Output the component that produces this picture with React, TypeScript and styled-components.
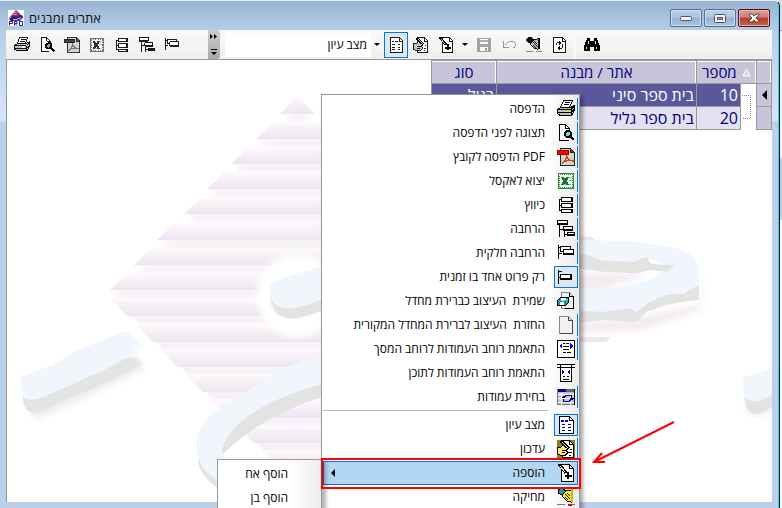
import React from "react";
import styled, { createGlobalStyle, css } from "styled-components";

const Global = createGlobalStyle`
  *, *::before, *::after { box-sizing: border-box; }
  html, body { margin: 0; height: 100%; overflow: hidden; background: #e6e6f2; }
  body, button, select { font-family: "Open Sans", "Liberation Sans", Arial, sans-serif; font-size: 12px; }
  button { margin: 0; padding: 0; border: 0; background: none; color: inherit; }
`;

/* ---------- window frame ---------- */

const Desktop = styled.div`
  height: 100vh;
  padding-right: 2px;
  background: linear-gradient(#dcdce8 30px, #8a8aa0 30px, #8a8aa0 31px, #f4f4fa 31px, #f4f4fa 158px, #c8c8dc 158px, #c8c8dc 220px, #fff 220px);
`;

const WindowFrame = styled.main`
  position: relative;
  display: flex;
  flex-direction: column;
  height: 100%;
  padding: 0 7px 6px 6px;
  border-top: 1px solid #e9f1fa;
  border-right: 1px solid #16202c;
  border-top-right-radius: 6px;
  background: linear-gradient(#98b3d2, #b6cde8 30px, #c3d8ee 60px, #d6e5f4 120px, #b9d1ea 121px);
  box-shadow: inset -1px 0 0 #2fd0f0;
`;

const TitleBar = styled.header`
  flex: none;
  display: flex;
  align-items: center;
  gap: 5px;
  height: 29px;
  padding: 5px 2px 0;
`;

const TitleText = styled.h1`
  flex: 1;
  margin: 0;
  font-size: 13px;
  line-height: 16px;
  font-weight: 400;
  color: #111;
`;

const Controls = styled.div`
  display: flex;
  gap: 2px;
`;

const ControlButton = styled.button<{ $danger?: boolean }>`
  display: grid;
  place-items: center;
  width: 32px;
  height: 18px;
  border: 1px solid ${(p) => (p.$danger ? "#4c1018" : "#586f8c")};
  border-radius: 2px;
  background: ${(p) =>
    p.$danger
      ? "linear-gradient(#dba49a, #cf7e72 45%, #b63c2b 50%, #c9634a)"
      : "linear-gradient(#bdd1e8, #adc5e0 45%, #93b1d3 50%, #aac4e2)"};
  box-shadow: inset 0 0 0 1px ${(p) => (p.$danger ? "#e8b5ac" : "#cfdff0")};
`;

/* ---------- toolbar ---------- */

const Toolbar = styled.div`
  flex: none;
  display: flex;
  align-items: center;
  height: 30px;
  border-bottom: 1px solid #999;
  background: linear-gradient(#fafafa, #eeeeee);
`;

const ToolGroup = styled.div`
  display: flex;
  align-items: center;
  gap: 1px;
  padding-left: 4px;
`;

const ToolButton = styled.button<{ $pressed?: boolean; $dim?: boolean }>`
  display: grid;
  place-items: center;
  width: 24px;
  height: 26px;
  opacity: ${(p) => (p.$dim ? 0.45 : 1)};
  ${(p) =>
    p.$pressed &&
    css`
      border: 1px solid #0078d7;
      background: #dce8f6;
    `}
`;

const ArrowButton = styled.button`
  display: grid;
  place-items: center;
  width: 12px;
  height: 24px;
`;

const Grip = styled.button`
  display: flex;
  flex-direction: column;
  align-items: center;
  justify-content: space-between;
  width: 12px;
  height: 29px;
  margin-left: 24px;
  padding: 4px 0;
  border-radius: 0 3px 3px 0;
  background: linear-gradient(#cdcdcd, #a9a9a9);
`;

const ModeSelect = styled.select`
  appearance: none;
  width: 146px;
  height: 24px;
  margin-left: 5px;
  padding: 0 4px;
  border: 0;
  background: #fff;
  color: #000;
`;

const EditGroup = styled.div`
  display: flex;
  align-items: center;
  gap: 1px;
  height: 29px;
  padding-right: 3px;
  border-right: 2px solid #f9f9f9;
`;

/* ---------- content ---------- */

const Content = styled.section`
  position: relative;
  flex: 1;
  min-height: 0;
  border-left: 1px solid #999;
  background: #fff;
  overflow: hidden;
`;

const WatermarkSvg = styled.svg`
  position: absolute;
  top: 0;
  left: 0;
`;

const Grid = styled.table`
  position: relative;
  width: 340px;
  margin-left: auto;
  border-collapse: collapse;
  table-layout: fixed;
  font-size: 16px;
  color: #00007f;
`;

const HeadCell = styled.th`
  height: 23px;
  padding: 0;
  border: 1px solid #999;
  background: #c8c5da;
  font-size: 15px;
  font-weight: 400;
  line-height: 20px;
  box-shadow: inset -1px 1px 0 #fff;
`;

const SortHead = styled.span`
  display: flex;
  align-items: center;
  justify-content: space-between;
  padding: 0 5px;
`;

const Row = styled.tr<{ $selected?: boolean }>`
  color: ${(p) => (p.$selected ? "#fff" : "#00007f")};
  --cell: ${(p) => (p.$selected ? "#5b579c" : "#e4e0f0")};
`;

const Cell = styled.td`
  height: 23px;
  padding: 0 2px;
  border: 1px solid #999;
  background: var(--cell);
  line-height: 20px;
  white-space: nowrap;
`;

const MarkCell = styled(Cell)`
  padding: 0 4px;
  background: #c8c5da;
`;

const TreeCell = styled.td`
  padding: 0;
  background: #fff;
`;

/* ---------- menus ---------- */

const menuBox = css`
  position: absolute;
  direction: rtl;
  border: 1px solid #999;
  background: linear-gradient(to left, #ececec, #fff 31px);
`;

const Menu = styled.div`
  ${menuBox}
  top: 93px;
  right: 199px;
  width: 259px;
  padding: 2px 1px;
  box-shadow: 3px 3px 4px rgba(0, 0, 0, 0.35);
`;

const SubMenu = styled.div`
  ${menuBox}
  top: 458px;
  right: 457px;
  width: 105px;
  padding: 2px 1px;
  box-shadow: 4px 3px 4px rgba(0, 0, 0, 0.3);
`;

const MenuItem = styled.button<{ $active?: boolean }>`
  display: flex;
  align-items: center;
  gap: 9px;
  width: 100%;
  height: 24px;
  border: 1px solid ${(p) => (p.$active ? "#0078d7" : "transparent")};
  border-right: 0;
  background: ${(p) => (p.$active ? "#b3d7f3" : "transparent")};
  color: #000;
  text-align: right;
`;

const IconSlot = styled.span<{ $checked?: boolean; $edge?: boolean }>`
  display: grid;
  place-items: center;
  width: 24px;
  height: 22px;
  border-right: 1px solid ${(p) => (p.$edge ? "#0078d7" : "transparent")};
  ${(p) =>
    p.$checked &&
    css`
      border: 1px solid #0078d7;
      background: #dce8f6;
    `}
`;

const MenuLabel = styled.span`
  flex: 1;
  line-height: 16px;
  white-space: pre;
`;

const SubLabel = styled(MenuLabel)`
  padding-right: 32px;
`;

const ArrowSlot = styled.span`
  display: grid;
  padding-left: 7px;
`;

const Separator = styled.hr`
  height: 1px;
  margin: 1px 30px 2px 0;
  border: 0;
  background: #b8b8b8;
`;

/* ---------- annotations ---------- */

const RedBox = styled.div`
  position: absolute;
  top: 457px;
  right: 198px;
  width: 260px;
  height: 31px;
  border: 2px solid #f00;
`;

const RedArrow = styled.svg`
  position: absolute;
  top: 417px;
  right: 103px;
`;

/* ---------- icons ---------- */

type IconName =
  | "print" | "preview" | "pdf" | "excel" | "collapse" | "expand" | "partial" | "single"
  | "saveDefault" | "restore" | "fitScreen" | "fitContent" | "columns" | "view" | "edit"
  | "add" | "delete" | "save" | "undo" | "refresh" | "find";

const Page = ({ x = 3 }: { x?: number }) => (
  <g stroke="#000" fill="#fff">
    <path d={`M${x + 0.5} .5H12.5l4 4V17.5H${x + 0.5}z`} />
    <path d="M12.5 .5v4h4" fill="none" />
  </g>
);

const glyph = (name: IconName, mono: boolean): React.ReactNode => {
  const tone = (colour: string, grey: string) => (mono ? grey : colour);
  switch (name) {
    case "print":
      return (
        <>
          <path d="M6.5 .5h9l-3 7h-9z" fill="#fff" stroke="#000" />
          <path d="M8 2.5h5M7 4.5h5" stroke="#000" />
          <path d="M3.500 7.500h10l4-2v5l-3 5h-11l-3-2v-4z" fill="#c0c0c0" stroke="#000" />
          <path d="M1 9.500h13l3-3M1 12.500h13l3-3M14.500 10v5M2 15.500h12" stroke="#000" fill="none" />
          <path d="M9 11h3" stroke={tone("#e8e000", "#fff")} strokeWidth="2" />
        </>
      );
    case "preview":
      return (
        <>
          <path d="M12.500 12V4.500l-4-4h-6v16h9" fill="#fff" stroke="#000" />
          <path d="M8.500 .500v4h4" fill="none" stroke="#000" />
          <circle cx="11" cy="10" r="3" fill={tone("#5fd8e0", "#999")} stroke="#000" strokeWidth="2" />
          <path d="M13 12l4 4" stroke="#000" strokeWidth="2.500" />
        </>
      );
    case "pdf":
      return (
        <>
          <path d="M3.500 .500h10l4 4v13h-14z" fill={tone("#c5ddc8", "#d4d4d4")} stroke="#222" />
          <path d="M13.500 .500v4h4z" fill={tone("#f00", "#555")} stroke="#222" />
          <path d="M5 16c3-3 5-7 4.500-9M9.500 7c.500 4 3 6 7 6M5 15c3-2.500 7-3 12-2" fill="none" stroke={tone("#e8392c", "#777")} strokeWidth="1.300" />
          <path d="M.500 2.500h11v4H.500z" fill={tone("#f00", "#444")} stroke={tone("#900", "#222")} />
        </>
      );
    case "excel":
      return (
        <>
          <path d="M1.500 1.500h15v15h-15z" fill="#f5faf5" stroke={tone("#2f8a3c", "#666")} />
          <path d="M2.500 2.500h13v13h-13z" stroke={tone("#2f8a3c", "#666")} strokeDasharray="1 1" />
          <path d="M4 12.500h10M12 5.500h3M12 8.500h3" stroke={tone("#8fc397", "#aaa")} />
          <path d="M5 5l6 8M11 5l-6 8" stroke={tone("#17752a", "#333")} strokeWidth="2.500" />
          <path d="M4 5.500h3M10 5.500h2M4 12.500h3M10 12.500h2" stroke={tone("#17752a", "#333")} />
        </>
      );
    case "collapse":
      return (
        <g fill="#fff" stroke="#000">
          <path d="M5 3.500H2.500v11H5M2.500 9.500H5" fill="none" />
          <path d="M4.500 1.500h11v4h-11zM4.500 7.500h11v4h-11zM4.500 13.500h11v3h-11z" />
          <path d="M14.500 2v4M14.500 8v4M14.500 14v3" />
        </g>
      );
    case "expand":
      return (
        <g fill="#fff" stroke="#000">
          <path d="M2.500 5v12M2.500 9.500H6M7.500 11v6M7.500 14.500h3" fill="none" />
          <path d="M.500 .500h10v4H.500zM6.500 6.500h9v4h-9zM10.500 12.500h7v3h-7z" />
          <path d="M1 3.500h10M7 9.500h9M11 14.500h7" />
        </g>
      );
    case "partial":
      return (
        <g fill="#fff" stroke="#000">
          <path d="M1.500 1v14M1.500 9.500H5M1 3.500h3" fill="none" />
          <path d="M3.500 2.500h10v5h-10z" />
          <path d="M6.500 5.500h10v5h-10z" />
          <path d="M7 9.500h10" />
        </g>
      );
    case "single":
      return (
        <g fill="#fff" stroke="#000">
          <path d="M1.500 2v14M1.500 3.500h3M1.500 9.500H5" fill="none" />
          <path d="M3.500 6.500h11v5h-11z" />
          <path d="M13.500 7v5M4 10.500h11" />
        </g>
      );
    case "saveDefault":
      return (
        <>
          <path d="M4.500 .500h8l4 4v12h-12z" fill="#eee" stroke="#888" />
          <path d="M12.500 .500v4h4v12H8" fill="none" stroke="#000" />
          <path d="M.500 8.500l3-3h8v5l-3 3h-8z" fill="#139c9c" stroke="#000" />
          <path d="M4 6h5v2H4zM3 10h4v3H3z" fill="#fff" />
          <path d="M9 9l2-2M4 8.500h4" stroke="#7ff" />
        </>
      );
    case "restore":
      return (
        <>
          <path d="M2.500 .500h9l4 4v13h-13z" fill="#f1f1f1" stroke="#888" />
          <path d="M11.500 .500v4h4v13H3" fill="none" stroke="#444" />
        </>
      );
    case "fitScreen":
      return (
        <>
          <rect x=".5" y=".5" width="17" height="17" rx="1" fill="#fff" stroke="#000" />
          <path d="M6 3.500h2m1 0h3M6 6.500h6M6 9.500h6M6 12.500h3m1 0h4" stroke="#000" />
          <path d="M2 6l3-3v6zM16 6l-3-3v6z" fill="#00d" />
        </>
      );
    case "fitContent":
      return (
        <>
          <path d="M3.500 0v17.500h11V0" fill="#fff" stroke="#000" />
          <path d="M0 .500h18M0 3.500h18M6 12.500h2m2 0h2M6 15.500h6" stroke="#000" />
          <path d="M8 8L5 5.500v5zM10 8l3-2.500v5z" fill="#00d" />
        </>
      );
    case "columns":
      return (
        <>
          <path d="M.500 1.500h17v15H.500z" fill="#c4c4c4" stroke="#777" />
          <path d="M1 1h8v3H1z" fill="#000090" />
          <path d="M9 1h9v3H9z" fill="#666" />
          <path d="M1 6.500h16M1 10.500h16M1 14.500h16M4.500 5v12M13.500 5v12" stroke="#fff" />
          <path d="M5 9.500h2l2-2h5v3M16 11.500h-2l-2 2H6v-3" fill="none" stroke="#000090" />
          <path d="M12 10h5l-2 2zM4 10h5l-3-2z" fill="#000090" />
          <path d="M17.500 1v16" stroke="#000" />
        </>
      );
    case "view":
      return (
        <>
          <Page x={2} />
          <path d="M4 5h3m1 0h3" stroke={tone("#00f", "#000")} strokeWidth={mono ? 1 : 2} />
          <path d="M5 8.500h3m3 0h3M5 11.500h3m3 0h3M5 14.500h3m3 0h3" stroke={tone("#0000a8", "#000")} />
        </>
      );
    case "edit":
      return (
        <>
          {!mono && <path d="M0 0h18v18H0z" fill="#8a8410" />}
          <Page x={5} />
          <path d="M4 1l8 8" stroke="#000" strokeWidth="3" />
          <path d="M5 2l7 7" stroke={tone("#fff27a", "#ddd")} />
          <path d="M0 7.500h3l3-2 5 3-2 2 2 2-3 3H4l-4-2z" fill={tone("#ffe97a", "#c4c4c4")} stroke="#000" />
          <path d="M5 10.500h4M5 12.500h3M12 12.500h3M12 15.500h2M13 9.500h2" stroke="#000" />
        </>
      );
    case "add":
      return (
        <>
          <Page x={4} />
          <path d="M2 0l7 9" stroke="#000" strokeWidth="3" />
          <path d="M3 2l5 6" stroke={tone("#fff27a", "#ddd")} />
          <path d="M11 8v7M7.500 12h7" stroke="#000" strokeWidth="2" />
        </>
      );
    case "delete":
      return (
        <>
          <path d="M7 3l7-1v12l-4-1-5-5z" fill={tone("#ffe920", "#bbb")} stroke="#000" />
          <path d="M1 2l4-2 4 3-4 4-4-2z" fill={tone("#0aa3a3", "#111")} stroke="#000" />
          <path d="M8 6l5 5M8 9l3 3M10 5l3 3" stroke="#000" />
          <path d="M15 1v13" stroke={tone("#d8b800", "#000")} strokeWidth="2" />
          <path d="M0 16.500h8m7 0h3" stroke="#777" />
          <path d="M11 16.500h4" stroke={tone("#e00", "#777")} strokeWidth={mono ? 1 : 2} />
        </>
      );
    case "save":
      return (
        <>
          <path d="M1 1h16v16H1z" fill="#444" />
          <path d="M4 2h10v6H4zM5 11h8v5H5z" fill="#fff" />
          <path d="M5 3.500h8M5 5.500h8" stroke="#444" />
          <path d="M10 12h2v4h-2z" fill="#444" />
        </>
      );
    case "undo":
      return (
        <>
          <path d="M4 10l4-4c3-2 7-2 8 1s-1 5-3 6" fill="none" stroke="#222" />
          <path d="M2.500 5v6.500H9" fill="none" stroke="#222" strokeWidth="1.500" />
        </>
      );
    case "refresh":
      return (
        <>
          <Page x={2} />
          <path d="M6.500 9.500V6.500H10M12.500 8v4.500H9" fill="none" stroke="#000" />
          <path d="M9 4l3 2.500L9 9zM10 10l-3 2.500 3 2.500z" fill="#000" />
        </>
      );
    case "find":
      return (
        <>
          <path d="M4 1h3v3h4V1h3l4 9v6h-7v-5H7v5H0v-6z" fill="#000" />
          <path d="M5.500 5v3M12.500 5v3M2.500 11v3M13.500 11v3" stroke="#fff" />
        </>
      );
  }
};

const Icon = ({ name, mono = false }: { name: IconName; mono?: boolean }) => (
  <svg
    width={mono ? 16 : 18}
    height={mono ? 16 : 18}
    viewBox="0 0 18 18"
    fill="none"
    shapeRendering="crispEdges"
    aria-hidden="true"
  >
    {glyph(name, mono)}
  </svg>
);

const DownArrow = () => (
  <svg width="6" height="3" viewBox="0 0 6 3" aria-hidden="true">
    <path d="M0 0h6L3 3z" fill="#000" />
  </svg>
);

const ArrowSvg = styled.svg`
  display: block;
`;

const LeftArrow = ({ size }: { size: number }) => (
  <ArrowSvg width={size / 2} height={size} viewBox="0 0 4 8" aria-hidden="true">
    <path d="M4 0v8L0 4z" fill="#000" />
  </ArrowSvg>
);

const AppLogo = () => (
  <svg width="16" height="16" viewBox="0 0 16 16" aria-hidden="true">
    <path d="M0 0h16v16H0z" fill="#fff" />
    <path d="M8 0l7 7-3 4H3L1 8z" fill="#7a2a78" />
    <path d="M5 4.500h4M2 7.500h5M6 2.500h3M10 6.500h3" stroke="#d79ccc" />
    <path d="M1 10l4-4 3 1 6-2 1 3-6 1-4 2z" fill="#241a6a" />
    <path d="M5 9.500h3l5-2" stroke="#b8c4f0" fill="none" />
    <path d="M1.500 15.500v-4h3v2h-3M6.500 15.500v-4H9v2H7l2 2M11.500 11.500h3v4h-3z" fill="#fff" stroke="#20209a" />
  </svg>
);

/* ---------- watermark ---------- */

const upper = [
  [280, 97], [256, 122], [231, 147], [207, 172], [184, 197], [157, 223], [134, 248], [110, 273],
].map(([x, y]) => [x * 3, (y - 60) * 3]);

const lower = [
  [110, 298], [135, 324], [160, 349], [185, 374], [211, 400], [236, 425], [261, 450],
].map(([x, y]) => [x * 3, (y - 60) * 3]);

const Watermark = () => (
  <WatermarkSvg width="765" height="442" viewBox="21 0 2295 1326" aria-hidden="true">
    <defs>
      <linearGradient id="stripe" x1="0" y1="0" x2="0" y2="1">
        <stop offset="0" stopColor="#fdfafc" />
        <stop offset=".5" stopColor="#f6eef5" />
        <stop offset="1" stopColor="#ece4f0" />
      </linearGradient>
      <linearGradient id="shade" x1="0" y1="0" x2="0" y2="1">
        <stop offset="0" stopColor="#f0ecf1" />
        <stop offset="1" stopColor="#f8f6f8" />
      </linearGradient>
      <filter id="soft"><feGaussianBlur stdDeviation="9" /></filter>
    </defs>
    {upper.map(([x, y], i) => (
      <g key={y}>
        <path d={`M${x + 30} ${y + 52}H${1788 - x - 20}l-20 26H${x + 14}z`} fill="url(#shade)" filter="url(#soft)" />
        {i === 0 ? (
          <path d={`M893 ${y - 4}L945 ${y + 52}H840z`} fill="url(#stripe)" />
        ) : (
          <path d={`M${x} ${y + 52}l52-52H${1788 - x - 52}l52 52z`} fill="url(#stripe)" />
        )}
      </g>
    ))}
    {lower.map(([x, y]) => (
      <g key={y}>
        <path d={`M${x + 60} ${y + 52}H${1788 - x - 50}l-20 24H${x + 84}z`} fill="#f6f2f6" />
        <path d={`M${x} ${y}H${1788 - x}l-52 54H${x + 52}z`} fill="url(#stripe)" />
      </g>
    ))}
    <ellipse cx="890" cy="706" rx="118" ry="126" fill="#fff" filter="url(#soft)" />
    <path d="M810 700c-10 80 50 90 160 50V620c-90 20-150 40-160 60z" fill="#f1f6fc" />
    <path d="M812 715c20 40 70 40 160 0v35c-80 30-145 50-160-35z" fill="#e3e3e3" />
    <path d="M80 1040l30 40 320-150 10-50z" fill="#f2eaf1" filter="url(#soft)" />
    <path d="M63 950L180 905 210 880 370 815Q400 820 437 875L410 890 380 890 300 935 190 985 100 1020Q60 1020 63 950z" fill="#f1f6fc" />
    <path d="M68 1008Q80 1025 115 1016L190 985 300 935 380 893 410 890 432 912 300 975 110 1060Q70 1060 68 1008z" fill="#e4e4e4" />
    <path d="M440 840L830 1230 800 1290 400 880z" fill="#fff" filter="url(#soft)" />
    <path d="M970 880C800 930 740 1010 650 1050 570 1110 570 1200 640 1260L700 1300 670 1180C670 1120 800 1030 970 970z" fill="#f1f6fc" />
    <path d="M970 972C780 1020 660 1110 667 1185 700 1150 800 1060 970 1010zM595 1195Q610 1240 660 1265V1290Q590 1240 595 1195z" fill="#e3e3e3" />

    <g transform="translate(1710 210)">
      <path d="M20 430L240 430 100 480 20 490zM20 580L210 560 400 520 400 420 390 540 220 600 20 610z" fill="#f3ebf1" filter="url(#soft)" />
      <path d="M-40 330H60L200 335 300 350Q380 365 387 420V480L340 485 290 500 230 520 200 542 150 540 100 545 0 545V480L130 475 200 460 250 445 300 410 230 385 200 400 100 395 0 375z" fill="#f1f6fc" />
      <path d="M0 375H50L100 392 190 395 232 380 240 400 280 405 315 405 290 425 240 420 200 430 100 425 0 412zM0 542L100 545 180 535 200 545 240 515 290 495 340 490 387 465V510L340 515 290 525 230 545 200 575 100 570 0 582z" fill="#e3e3e3" />
      <path d="M0 320H65L75 330H0zM0 622H123L108 636H0z" fill="#f0e6f0" />
      <path d="M525 830Q540 880 606 840V820H540z" fill="#f2eaf1" filter="url(#soft)" />
      <path d="M520 740Q570 730 606 710V795Q530 835 520 790z" fill="#f1f6fc" />
      <path d="M523 800Q550 830 606 793V830Q530 885 523 800z" fill="#e3e3e3" />
    </g>
  </WatermarkSvg>
);

const TreeLines = styled.svg`
  display: block;
`;

/* ---------- data ---------- */

type Item = { icon: IconName; label: string; edge?: boolean; checked?: boolean; active?: boolean };

const viewItems: Item[] = [
  { icon: "print", label: "הדפסה", edge: true },
  { icon: "preview", label: "תצוגה לפני הדפסה", edge: true },
  { icon: "pdf", label: "PDF הדפסה לקובץ", edge: true },
  { icon: "excel", label: "יצוא לאקסל", edge: true },
  { icon: "collapse", label: "כיווץ", edge: true },
  { icon: "expand", label: "הרחבה", edge: true },
  { icon: "partial", label: "הרחבה חלקית", edge: true },
  { icon: "single", label: "רק פרוט אחד בו זמנית", checked: true },
  { icon: "saveDefault", label: "שמירת  העיצוב כברירת מחדל" },
  { icon: "restore", label: "החזרת  העיצוב לברירת המחדל המקורית", edge: true },
  { icon: "fitScreen", label: "התאמת רוחב העמודות לרוחב המסך", edge: true },
  { icon: "fitContent", label: "התאמת רוחב העמודות לתוכן" },
  { icon: "columns", label: "בחירת עמודות", edge: true },
];

const editItems: Item[] = [
  { icon: "view", label: "מצב עיון", checked: true },
  { icon: "edit", label: "עדכון", edge: true },
  { icon: "add", label: "הוספה", edge: true, active: true },
  { icon: "delete", label: "מחיקה" },
];

const printTools: { icon: IconName; label: string }[] = [
  { icon: "print", label: "הדפסה" },
  { icon: "preview", label: "תצוגה לפני הדפסה" },
  { icon: "pdf", label: "PDF" },
  { icon: "excel", label: "יצוא לאקסל" },
  { icon: "collapse", label: "כיווץ" },
  { icon: "expand", label: "הרחבה" },
  { icon: "partial", label: "הרחבה חלקית" },
];

const MenuRow = ({ item }: { item: Item }) => (
  <MenuItem role="menuitem" $active={item.active}>
    <IconSlot $checked={item.checked} $edge={item.edge}>
      <Icon name={item.icon} />
    </IconSlot>
    <MenuLabel>{item.label}</MenuLabel>
    {item.active && (
      <ArrowSlot>
        <LeftArrow size={8} />
      </ArrowSlot>
    )}
  </MenuItem>
);

export default function App() {
  return (
    <Desktop>
      <Global />
      <WindowFrame>
        <TitleBar>
          <AppLogo />
          <TitleText>אתרים ומבנים</TitleText>
          <Controls>
            <ControlButton aria-label="מזעור">
              <svg width="12" height="5" viewBox="0 0 12 5">
                <rect x=".5" y=".5" width="11" height="4" rx="1" fill="#f4f4f4" stroke="#4a5668" />
              </svg>
            </ControlButton>
            <ControlButton aria-label="הגדלה">
              <svg width="12" height="9" viewBox="0 0 12 9">
                <rect x=".5" y=".5" width="11" height="8" rx="1" fill="#f4f4f4" stroke="#4a5668" />
                <rect x="3.500" y="3.500" width="5" height="2" fill="#8fb0d4" stroke="#4a5668" />
              </svg>
            </ControlButton>
            <ControlButton $danger aria-label="סגירה">
              <svg width="12" height="10" viewBox="0 0 12 10">
                <path d="M1 1h3l2 2 2-2h3v1L8 5l3 3v1H8L6 7 4 9H1V8l3-3-3-3z" fill="#f6f6f6" stroke="#4a4a58" />
              </svg>
            </ControlButton>
          </Controls>
        </TitleBar>

        <Toolbar role="toolbar">
          <ToolGroup>
            {printTools.map((t) => (
              <ToolButton key={t.icon} aria-label={t.label}>
                <Icon name={t.icon} mono />
              </ToolButton>
            ))}
          </ToolGroup>
          <Grip aria-label="אפשרויות נוספות">
            <svg width="8" height="5" viewBox="0 0 8 5">
              <path d="M0 0l3 2.500L0 5zM4 0l3 2.500L4 5z" fill="#000" />
            </svg>
            <svg width="6" height="6" viewBox="0 0 6 6">
              <path d="M0 0h6v1H0zM0 3h6L3 6z" fill="#000" />
            </svg>
          </Grip>
          <ModeSelect dir="rtl" aria-label="מצב" defaultValue="view">
            <option value="view">מצב עיון</option>
          </ModeSelect>
          <EditGroup>
            <ArrowButton aria-label="פתיחת רשימה"><DownArrow /></ArrowButton>
            <ToolButton $pressed aria-label="מצב עיון"><Icon name="view" mono /></ToolButton>
            <ToolButton aria-label="עדכון"><Icon name="edit" mono /></ToolButton>
            <ToolButton aria-label="הוספה"><Icon name="add" mono /></ToolButton>
            <ArrowButton aria-label="אפשרויות הוספה"><DownArrow /></ArrowButton>
            <ToolButton $dim aria-label="שמירה"><Icon name="save" mono /></ToolButton>
            <ToolButton $dim aria-label="ביטול"><Icon name="undo" mono /></ToolButton>
            <ToolButton aria-label="מחיקה"><Icon name="delete" mono /></ToolButton>
            <ToolButton aria-label="רענון"><Icon name="refresh" mono /></ToolButton>
          </EditGroup>
          <ToolGroup>
            <ToolButton aria-label="חיפוש"><Icon name="find" mono /></ToolButton>
          </ToolGroup>
        </Toolbar>

        <Content dir="rtl">
          <Watermark />
          <Grid>
            <colgroup>
              <col width="15" />
              <col width="16" />
              <col width="44" />
              <col width="200" />
              <col width="65" />
            </colgroup>
            <thead>
              <tr>
                <HeadCell aria-label="סמן" />
                <HeadCell colSpan={2}>
                  <SortHead>
                    <svg width="9" height="9" viewBox="0 0 9 9" aria-hidden="true">
                      <path d="M4.500 1L8 8H1z" fill="#d4d2e0" stroke="#fff" />
                    </svg>
                    מספר
                  </SortHead>
                </HeadCell>
                <HeadCell>אתר / מבנה</HeadCell>
                <HeadCell>סוג</HeadCell>
              </tr>
            </thead>
            <tbody>
              <Row $selected>
                <MarkCell><LeftArrow size={10} /></MarkCell>
                <TreeCell rowSpan={2}>
                  <TreeLines width="14" height="44" viewBox="0 0 14 44" aria-hidden="true">
                    <path d="M0 10.500h8.500v23H0" fill="none" stroke="#888" strokeDasharray="1 1" />
                  </TreeLines>
                </TreeCell>
                <Cell>10</Cell>
                <Cell>בית ספר סיני</Cell>
                <Cell>רגיל</Cell>
              </Row>
              <Row>
                <MarkCell />
                <Cell>20</Cell>
                <Cell>בית ספר גליל</Cell>
                <Cell>רגיל</Cell>
              </Row>
            </tbody>
          </Grid>
        </Content>

        <Menu role="menu">
          {viewItems.map((item) => <MenuRow key={item.icon} item={item} />)}
          <Separator />
          {editItems.map((item) => <MenuRow key={item.icon} item={item} />)}
        </Menu>
        <SubMenu role="menu">
          <MenuItem role="menuitem"><SubLabel>הוסף אח</SubLabel></MenuItem>
          <MenuItem role="menuitem"><SubLabel>הוסף בן</SubLabel></MenuItem>
        </SubMenu>
        <RedBox />
        <RedArrow width="84" height="50" viewBox="0 0 84 50" aria-hidden="true">
          <path d="M82 4L2 44M10 35L2 44h11" fill="none" stroke="#f00" strokeWidth="2" />
        </RedArrow>
      </WindowFrame>
    </Desktop>
  );
}
